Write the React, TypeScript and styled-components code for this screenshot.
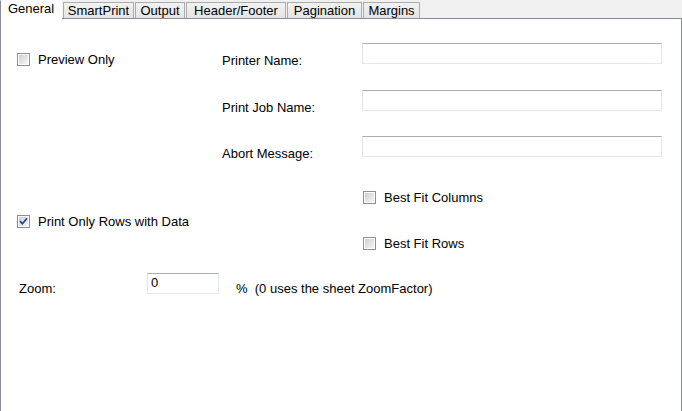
import React from "react";
import styled, { createGlobalStyle } from "styled-components";

const Global = createGlobalStyle`
  html, body { margin: 0; padding: 0; background: #f0f0f0; }
  body { font-family: "Liberation Sans", Arial, sans-serif; font-size: 13px; color: #000; }
  #root { width: 682px; height: 411px; overflow: hidden; }
`;

const Frame = styled.div`
  width: 682px;
  height: 411px;
  display: flex;
  flex-direction: column;
  background: #f0f0f0;
`;

const TabStrip = styled.div`
  height: 18px;
  display: flex;
  align-items: flex-end;
  gap: 1px;
  position: relative;
  z-index: 1;
`;

const Tab = styled.div<{ $active?: boolean; $w: number }>`
  box-sizing: border-box;
  width: ${(p) => p.$w}px;
  height: ${(p) => (p.$active ? 19 : 16)}px;
  margin-bottom: ${(p) => (p.$active ? -1 : 0)}px;
  display: flex;
  align-items: center;
  justify-content: center;
  line-height: 15px;
  padding-bottom: ${(p) => (p.$active ? 3 : 0)}px;
  border: 1px solid ${(p) => (p.$active ? "#ffffff" : "#acacac")};
  border-bottom: none;
  border-left-color: ${(p) => (p.$active ? "#898c95" : "#acacac")};
  background: ${(p) =>
    p.$active ? "#ffffff" : "linear-gradient(#f2f2f2, #e4e4e4)"};
`;

const Panel = styled.div`
  flex: 1;
  background: #ffffff;
  border: 1px solid #898c95;
  border-bottom: none;
  padding-left: 16px;
  display: flex;
  flex-direction: column;
`;

const Spacer = styled.div<{ $h: number }>`
  height: ${(p) => p.$h}px;
  flex: none;
`;

const Row = styled.div<{ $h: number }>`
  height: ${(p) => p.$h}px;
  display: grid;
  grid-template-columns: 205px 140px 300px;
  align-items: start;
  flex: none;
`;

const Cell = styled.div<{ $top?: number; $left?: number }>`
  margin-top: ${(p) => p.$top ?? 0}px;
  margin-left: ${(p) => p.$left ?? 0}px;
`;

const Label = styled.div<{ $top?: number }>`
  margin-top: ${(p) => p.$top ?? 0}px;
  line-height: 15px;
  white-space: nowrap;
`;

const TextBox = styled.div<{ $w: number }>`
  box-sizing: border-box;
  width: ${(p) => p.$w}px;
  height: 21px;
  background: #fff;
  border: 1px solid #e3e9ef;
  border-top-color: #abadb3;
  border-left-color: #e2e3ea;
  padding: 1px 3px 0;
  line-height: 15px;
`;

const CheckRow = styled.label`
  display: flex;
  align-items: center;
  gap: 8px;
  line-height: 15px;
  white-space: nowrap;
`;

const Box = styled.span`
  box-sizing: border-box;
  width: 13px;
  height: 13px;
  border: 1px solid #8e8f8f;
  background: #fff;
  padding: 1px;
  display: flex;
  flex: none;
`;

const BoxInner = styled.span`
  flex: 1;
  background: linear-gradient(135deg, #cbcfd5 0%, #f6f6f6 100%);
  display: flex;
  align-items: center;
  justify-content: center;
`;

const Check: React.FC<{ checked?: boolean; label: string }> = ({ checked, label }) => (
  <CheckRow>
    <Box>
      <BoxInner>
        {checked && (
          <svg width="9" height="9" viewBox="0 0 9 9">
            <path d="M1 4.2 L3.4 6.8 L8 1.2" stroke="#2a3f8f" strokeWidth="1.7" fill="none" />
          </svg>
        )}
      </BoxInner>
    </Box>
    <span>{label}</span>
  </CheckRow>
);

const ZoomRow = styled.div`
  display: flex;
  align-items: flex-start;
  flex: none;
  padding-left: 2px;
`;

const ZoomLabel = styled.div`
  width: 128px;
  margin-top: 8px;
  line-height: 15px;
`;

const Suffix = styled.div`
  margin-left: 17px;
  margin-top: 8px;
  line-height: 15px;
  white-space: pre;
`;

export default function App() {
  const tabs: [string, number][] = [
    ["SmartPrint", 71],
    ["Output", 50],
    ["Header/Footer", 100],
    ["Pagination", 75],
    ["Margins", 57],
  ];
  return (
    <Frame>
      <Global />
      <TabStrip>
        <Tab $active $w={62}>General</Tab>
        {tabs.map(([t, w]) => (
          <Tab key={t} $w={w}>{t}</Tab>
        ))}
      </TabStrip>
      <Panel>
        <Spacer $h={24} />
        <Row $h={47}>
          <Cell $top={9}><Check label="Preview Only" /></Cell>
          <Label $top={10}>Printer Name:</Label>
          <TextBox $w={300} />
        </Row>
        <Row $h={46}>
          <Cell />
          <Label $top={10}>Print Job Name:</Label>
          <TextBox $w={300} />
        </Row>
        <Row $h={46}>
          <Cell />
          <Label $top={10}>Abort Message:</Label>
          <TextBox $w={300} />
        </Row>
        <Row $h={46}>
          <Cell $top={32}><Check checked label="Print Only Rows with Data" /></Cell>
          <Cell />
          <Cell $top={8} $left={1}><Check label="Best Fit Columns" /></Cell>
        </Row>
        <Row $h={45}>
          <Cell />
          <Cell />
          <Cell $top={8} $left={1}><Check label="Best Fit Rows" /></Cell>
        </Row>
        <ZoomRow>
          <ZoomLabel>Zoom:</ZoomLabel>
          <TextBox $w={72}>0</TextBox>
          <Suffix>%  (0 uses the sheet ZoomFactor)</Suffix>
        </ZoomRow>
      </Panel>
    </Frame>
  );
}
